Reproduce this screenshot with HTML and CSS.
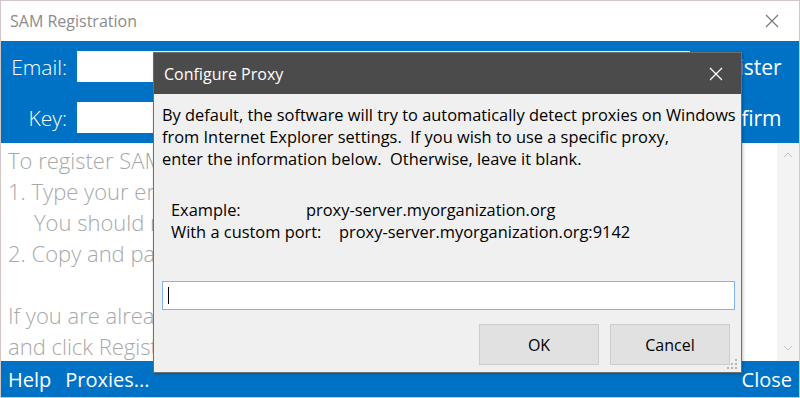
FILE: index.html
```html
<!DOCTYPE html>
<html lang="en">
<head>
    <meta charset="UTF-8">
    <title>SAM Registration</title>
    <link rel="stylesheet" href="styles.css">
</head>
<body>
    <div class="window">
        <div class="titlebar">
            <span class="title">SAM Registration</span>
            <svg class="close" width="14" height="14" viewBox="0 0 14 14"><path d="M1 1 L13 13 M13 1 L1 13" stroke="#7a7a7a" stroke-width="1.2"/></svg>
        </div>

        <div class="form">
            <div class="form-row">
                <label class="form-label">Email:</label>
                <div class="form-input"></div>
                <span class="form-btn">Register</span>
            </div>
            <div class="form-row">
                <label class="form-label">Key:</label>
                <div class="form-input"></div>
                <span class="form-btn">Confirm</span>
            </div>
        </div>

        <div class="content">
            <div class="content-text">
                <p>To register SAM, follow these steps:</p>
                <p>1. Type your email address and click Register.</p>
                <p class="indent">You should receive an email with a key.</p>
                <p>2. Copy and paste the key and click Confirm.</p>
                <p>&nbsp;</p>
                <p>If you are already registered, enter your email address</p>
                <p>and click Register to receive a new key.</p>
            </div>
            <div class="scrollbar">
                <svg width="10" height="6" viewBox="0 0 10 6"><path d="M1 5 L5 1 L9 5" fill="none" stroke="#c2c2c2" stroke-width="1"/></svg>
                <svg width="10" height="6" viewBox="0 0 10 6"><path d="M1 1 L5 5 L9 1" fill="none" stroke="#c2c2c2" stroke-width="1"/></svg>
            </div>
        </div>

        <div class="footer">
            <span>Help</span>
            <span>Proxies...</span>
            <span class="footer-right">Close</span>
        </div>
    </div>

    <!-- modal dialog on top of the window -->
    <div class="dialog">
        <div class="dlg-title">
            <span>Configure Proxy</span>
            <svg width="14" height="14" viewBox="0 0 14 14"><path d="M1 1 L13 13 M13 1 L1 13" stroke="#ffffff" stroke-width="1.3"/></svg>
        </div>
        <div class="dlg-body">
            <p class="dlg-text">By default, the software will try to automatically detect proxies on Windows<br>from Internet Explorer settings.&nbsp; If you wish to use a specific proxy,<br>enter the information below.&nbsp; Otherwise, leave it blank.</p>
            <div class="examples">
                <div class="ex-row"><span class="ex-label">Example:</span><span>proxy-server.myorganization.org</span></div>
                <div class="ex-row"><span class="ex-label ex-wide">With a custom port:</span><span>proxy-server.myorganization.org:9142</span></div>
            </div>
            <div class="dlg-input"><span class="caret"></span></div>
            <div class="dlg-buttons">
                <button class="btn">OK</button>
                <button class="btn">Cancel</button>
            </div>
        </div>
        <svg class="grip" width="11" height="11" viewBox="0 0 11 11">
            <rect x="8" y="0" width="2" height="2" fill="#b5b5b5"/>
            <rect x="4" y="4" width="2" height="2" fill="#b5b5b5"/>
            <rect x="8" y="4" width="2" height="2" fill="#b5b5b5"/>
            <rect x="0" y="8" width="2" height="2" fill="#b5b5b5"/>
            <rect x="4" y="8" width="2" height="2" fill="#b5b5b5"/>
            <rect x="8" y="8" width="2" height="2" fill="#b5b5b5"/>
        </svg>
    </div>
</body>
</html>
```

FILE: styles.css
```css
* {
    box-sizing: border-box;
}
body {
    margin: 0;
    font-family: "Open Sans", "Noto Sans", sans-serif;
    background-color: #ffffff;
}
.window {
    width: 800px;
    height: 398px;
    border: 1px solid #d2c6c6;
    display: flex;
    flex-direction: column;
    background-color: #ffffff;
}
.titlebar {
    height: 40px;
    display: flex;
    align-items: center;
    justify-content: space-between;
    padding: 0 20px 0 9px;
}
.title {
    font-size: 16px;
    color: #8c8c8c;
}
.form {
    height: 102px;
    background-color: #0072c6;
    padding: 10px 0 0 0;
    display: flex;
    flex-direction: column;
    gap: 20px;
}
.form-row {
    display: flex;
    align-items: center;
    height: 31px;
}
.form-label {
    width: 66px;
    text-align: right;
    font-size: 21px;
    font-weight: 300;
    color: #ffffff;
}
.form-input {
    margin-left: 10px;
    width: 613px;
    height: 31px;
    background-color: #ffffff;
}
.form-btn {
    width: 104px;
    text-align: center;
    font-size: 21px;
    color: #ffffff;
}
.content {
    flex: 1;
    display: flex;
    overflow: hidden;
}
.content-text {
    flex: 1;
    padding: 2px 0 0 7px;
    font-size: 22px;
    font-weight: 300;
    color: #a8a8a8;
    white-space: nowrap;
    overflow: hidden;
}
.content-text p {
    margin: 0;
    line-height: 31px;
}
.content-text .indent {
    padding-left: 26px;
}
.scrollbar {
    width: 22px;
    background-color: #f3f3f3;
    display: flex;
    flex-direction: column;
    justify-content: space-between;
    align-items: center;
    padding: 9px 0 10px 0;
}
.footer {
    height: 36px;
    background-color: #0072c6;
    display: flex;
    align-items: center;
    gap: 14px;
    padding: 0 7px;
    font-size: 20px;
    color: #ffffff;
}
.footer-right {
    margin-left: auto;
}
.dialog {
    position: absolute;
    left: 153px;
    top: 52px;
    width: 589px;
    height: 321px;
    border: 1px solid #6f6f6f;
    background-color: #f0f0f0;
    box-shadow: 1px 1px 3px rgba(0, 0, 0, 0.25);
}
.dlg-title {
    height: 41px;
    background-color: #4b4b4b;
    display: flex;
    align-items: center;
    justify-content: space-between;
    padding: 0 18px 0 10px;
    font-size: 16px;
    color: #ffffff;
}
.dlg-body {
    padding: 10px 6px 0 8px;
    font-size: 16.4px;
    color: #000000;
}
.dlg-text {
    margin: 0;
    line-height: 22px;
    white-space: nowrap;
}
.examples {
    margin-top: 29px;
    padding-left: 9px;
}
.ex-row {
    line-height: 22px;
    white-space: nowrap;
}
.ex-label {
    display: inline-block;
    width: 135px;
}
.ex-wide {
    width: 168px;
}
.dlg-input {
    margin-top: 38px;
    width: 573px;
    height: 29px;
    background-color: #ffffff;
    border: 1px solid #7eb4ea;
    padding: 5px 5px;
}
.caret {
    display: block;
    width: 1px;
    height: 17px;
    background-color: #000000;
}
.dlg-buttons {
    display: flex;
    justify-content: flex-end;
    gap: 11px;
    margin-top: 14px;
    padding-right: 5px;
}
.btn {
    width: 120px;
    height: 41px;
    background-color: #e1e1e1;
    border: 1px solid #cdcdcd;
    font-family: "Open Sans", "Noto Sans", sans-serif;
    font-size: 16px;
    color: #000000;
}
.grip {
    position: absolute;
    right: 3px;
    bottom: 2px;
}
```
